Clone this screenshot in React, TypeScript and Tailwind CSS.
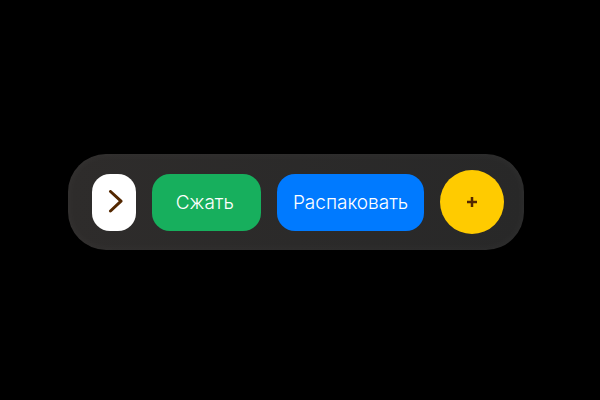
import type { ReactNode } from 'react';

interface ActionButtonProps {
  className: string;
  children: ReactNode;
}

function ActionButton({ className, children }: ActionButtonProps) {
  return (
    <button
      type="button"
      className={`h-[57px] rounded-[18px] pt-px text-[19px] leading-6 font-light text-white ${className}`}
    >
      {children}
    </button>
  );
}

export default function App() {
  return (
    <main className="flex min-h-screen items-center justify-center bg-black pt-1 pr-2 font-['Inter','Liberation_Sans',sans-serif]">
      <div
        role="toolbar"
        aria-label="Архив"
        className="flex items-center gap-4 rounded-[38px] bg-linear-to-r from-[#2e2c2b] to-[#282828] py-4 pr-5 pl-6 shadow-[inset_0_0_12px_rgba(255,255,255,0.04)]"
      >
        <button
          type="button"
          aria-label="Далее"
          className="flex h-[57px] w-11 items-center justify-center rounded-[18px] bg-white text-[#532700]"
        >
          <svg
            width="24"
            height="24"
            viewBox="0 0 24 24"
            fill="none"
            stroke="currentColor"
            strokeWidth="3"
            strokeLinecap="round"
            strokeLinejoin="round"
          >
            <path d="M8.5 1.5 19 11.2 8.5 21" />
          </svg>
        </button>

        <ActionButton className="bg-[#17af5d] pr-[27px] pl-6">Сжать</ActionButton>
        <ActionButton className="bg-[#007aff] px-4">Распаковать</ActionButton>

        <button
          type="button"
          aria-label="Добавить"
          className="flex size-16 items-center justify-center rounded-full bg-[#ffcb00] text-[#532700]"
        >
          <svg width="10" height="10" viewBox="0 0 10 10" stroke="currentColor" strokeWidth="2.5">
            <path d="M5 0v10M0 5h10" />
          </svg>
        </button>
      </div>
    </main>
  );
}
